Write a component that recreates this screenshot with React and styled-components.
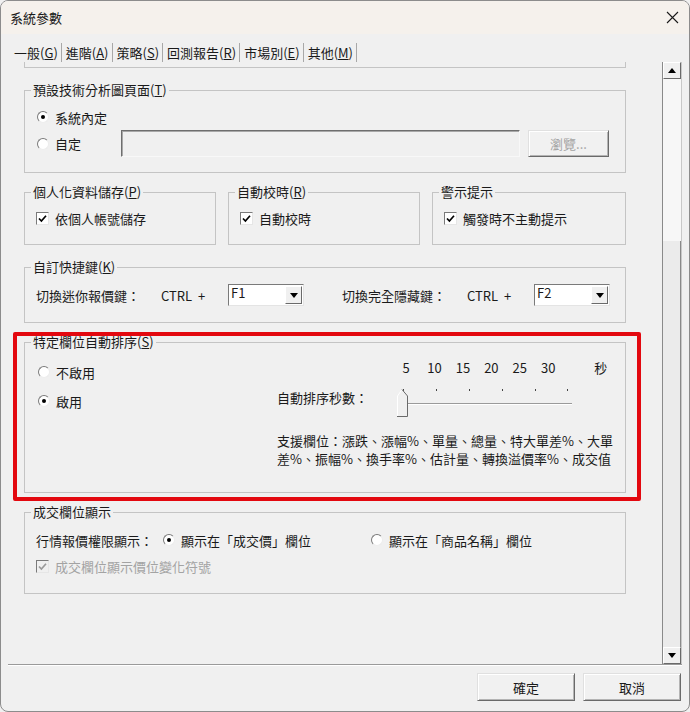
import React from "react";
import styled, { createGlobalStyle } from "styled-components";

const GlobalStyle = createGlobalStyle`
  html, body {
    margin: 0;
    padding: 0;
    background: #f0f0f0;
  }
  body {
    font-family: "Noto Sans CJK TC", "Noto Sans", sans-serif;
    font-size: 13px;
    color: #1a1a1a;
  }
`;

const Window = styled.div`
  box-sizing: border-box;
  width: 690px;
  height: 712px;
  background: #f0f0f0;
  border: 1px solid #8c8c8c;
  border-radius: 8px;
  overflow: hidden;
  display: flex;
  flex-direction: column;
`;

const TitleBar = styled.div`
  height: 33px;
  flex-shrink: 0;
  background: #f5f1ec;
  display: flex;
  align-items: center;
  justify-content: space-between;
  padding: 0 10px 0 9px;
  font-size: 13px;
`;

const TabStrip = styled.div`
  display: flex;
  margin-top: 9px;
  height: 19px;
  padding-left: 13px;
`;

const Tab = styled.div`
  line-height: 19px;
  padding: 0 3px 0 ${({ $first }) => ($first ? 0 : 4)}px;
  border-right: 1px solid #a8a8a8;
  white-space: nowrap;
`;

const ScrollArea = styled.div`
  box-sizing: border-box;
  display: flex;
  margin-left: 7px;
  width: 674px;
  height: 603px;
  border-bottom: 1px solid #9a9a9a;
  box-shadow: 0 1px 0 #ffffff;
`;

const Content = styled.div`
  flex: 1;
  padding-left: 16px;
  display: flex;
  flex-direction: column;
  overflow: hidden;
`;

const Fragment = styled.div`
  box-sizing: border-box;
  width: 602px;
  height: 6px;
  border: 1px solid #c4c4c4;
  border-top: none;
  flex-shrink: 0;
`;

const GroupBox = styled.fieldset`
  box-sizing: border-box;
  margin: ${({ $mt }) => $mt || 0}px 0 0 0;
  padding: 0;
  min-width: 0;
  width: ${({ $w }) => ($w ? `${$w}px` : "602px")};
  height: ${({ $h }) => $h}px;
  border: 1px solid #c4c4c4;
  flex-shrink: 0;
`;

const Legend = styled.legend`
  margin-left: 6px;
  padding: 0 2px;
  line-height: 16px;
  font-size: 13px;
  white-space: nowrap;
`;

const GroupBody = styled.div`
  padding: ${({ $pt }) => $pt || 0}px 0 0 ${({ $pl }) => ($pl === undefined ? 11 : $pl)}px;
  display: ${({ $row }) => ($row ? "flex" : "block")};
`;

const GroupRow = styled.div`
  display: grid;
  grid-template-columns: 192px 192px 194px;
  column-gap: 12px;
  margin-top: 11px;
  flex-shrink: 0;
`;

const Row = styled.div`
  display: flex;
  align-items: center;
  height: ${({ $h }) => $h || 20}px;
  margin-top: ${({ $mt }) => $mt || 0}px;
  white-space: nowrap;
  color: ${({ $disabled }) => ($disabled ? "#a3a3a3" : "inherit")};
`;

const Cell = styled.div`
  width: ${({ $w }) => $w}px;
  flex-shrink: 0;
  display: flex;
  align-items: center;
`;

const RadioDot = styled.span`
  box-sizing: border-box;
  width: 12px;
  height: 12px;
  border-radius: 50%;
  background: #ffffff;
  border: 1px solid;
  border-color: #7a7a7a #ececec #ececec #7a7a7a;
  margin-right: 6px;
  position: relative;
  flex-shrink: 0;

  &::after {
    content: "";
    display: ${({ $on }) => ($on ? "block" : "none")};
    position: absolute;
    left: 3px;
    top: 3px;
    width: 4px;
    height: 4px;
    border-radius: 50%;
    background: #000;
  }
`;

const CheckBox = styled.span`
  box-sizing: border-box;
  width: 13px;
  height: 13px;
  background: ${({ $disabled }) => ($disabled ? "#f0f0f0" : "#ffffff")};
  border: 1px solid;
  border-color: #7a7a7a #e6e6e6 #e6e6e6 #7a7a7a;
  margin-right: 6px;
  display: flex;
  align-items: center;
  justify-content: center;
  flex-shrink: 0;
`;

const TextField = styled.div`
  box-sizing: border-box;
  width: 399px;
  height: 27px;
  border: 1px solid;
  border-color: #6e6e6e #f8f8f8 #f8f8f8 #6e6e6e;
  box-shadow: inset 1px 1px 0 #a8a8a8;
  background: #f0f0f0;
`;

const PushButton = styled.button`
  box-sizing: border-box;
  width: ${({ $w }) => $w}px;
  height: ${({ $h }) => $h}px;
  margin-left: ${({ $ml }) => $ml || 0}px;
  background: #f1f1f1;
  border: 1px solid;
  border-color: #e0e0e0 #6a6a6a #6a6a6a #e0e0e0;
  box-shadow: inset 1px 1px 0 #ffffff, inset -1px -1px 0 #b4b4b4;
  font-family: inherit;
  font-size: 13px;
  color: ${({ $disabled }) => ($disabled ? "#a3a3a3" : "#1a1a1a")};
  padding: 0;
`;

const Combo = styled.div`
  box-sizing: border-box;
  width: 76px;
  height: 22px;
  background: #ffffff;
  border: 1px solid;
  border-color: #7a7a7a #e4e4e4 #e4e4e4 #7a7a7a;
  display: flex;
  align-items: flex-start;
  justify-content: space-between;
  font-size: 13px;
  line-height: 16px;
  padding-left: 2px;
`;

const DropButton = styled.div`
  box-sizing: border-box;
  width: 17px;
  height: 18px;
  margin: 1px 1px 0 0;
  background: #f0f0f0;
  border: 1px solid;
  border-color: #ffffff #6a6a6a #6a6a6a #ffffff;
  display: flex;
  align-items: center;
  justify-content: center;

  &::after {
    content: "";
    border-left: 4px solid transparent;
    border-right: 4px solid transparent;
    border-top: 5px solid #000;
  }
`;

const RedFrame = styled.div`
  box-sizing: border-box;
  margin: 9px 0 0 -11px;
  width: 628px;
  height: 169px;
  border: 4px solid #e3080f;
  border-radius: 2px;
  padding: 0 10px 0 7px;
  flex-shrink: 0;
`;

const LeftCol = styled.div`
  box-sizing: border-box;
  width: 252px;
  padding: 12px 0 0 13px;
  flex-shrink: 0;
`;

const RightCol = styled.div`
  padding-top: 9px;
`;

const ScaleRow = styled.div`
  display: flex;
  height: 18px;
  line-height: 18px;
  padding-left: 115px;
`;

const ScaleNum = styled.span`
  width: 28.4px;
  text-align: center;
`;

const ScaleUnit = styled.span`
  margin-left: 32px;
`;

const SliderRow = styled.div`
  display: flex;
  margin-top: 9px;
  height: 32px;
`;

const SliderLabel = styled.div`
  width: 118px;
  margin-top: 3px;
  line-height: 18px;
  white-space: nowrap;
`;

const Support = styled.div`
  margin-top: 14px;
  line-height: 18px;
  white-space: nowrap;
`;

const ScrollBar = styled.div`
  box-sizing: border-box;
  width: 20px;
  display: flex;
  flex-direction: column;
  border-left: 1px solid #8a8a8a;
  border-right: 1px solid #c8c8c8;
`;

const ArrowButton = styled.div`
  box-sizing: border-box;
  height: 17px;
  flex-shrink: 0;
  background: #f0f0f0;
  border: 1px solid;
  border-color: #ffffff #6a6a6a #6a6a6a #ffffff;
  display: flex;
  align-items: center;
  justify-content: center;

  &::after {
    content: "";
    border-left: 4px solid transparent;
    border-right: 4px solid transparent;
    ${({ $dir }) =>
      $dir === "up"
        ? "border-bottom: 5px solid #000;"
        : "border-top: 5px solid #000;"}
  }
`;

const Thumb = styled.div`
  height: 162px;
  background: #f7f7f7;
  flex-shrink: 0;
`;

const Track = styled.div`
  flex: 1;
  background: #ebebeb;
  border-right: 1px solid #8a8a8a;
`;

const Footer = styled.div`
  display: flex;
  justify-content: flex-end;
  gap: 8px;
  padding: 8px 8px 0 0;
`;

const Radio = ({ on, children }) => (
  <>
    <RadioDot $on={on} />
    <span>{children}</span>
  </>
);

const Check = ({ disabled, children }) => (
  <>
    <CheckBox $disabled={disabled}>
      <svg width="9" height="9" viewBox="0 0 9 9">
        <path
          d="M1 4.5 L3.4 7 L8 1.8"
          fill="none"
          stroke={disabled ? "#9a9a9a" : "#000"}
          strokeWidth="1.7"
        />
      </svg>
    </CheckBox>
    <span>{children}</span>
  </>
);

// slider drawn as a small svg: ticks, sunken track, pointer thumb
const Slider = () => {
  const ticks = [8, 41, 74, 107, 140, 172];
  return (
    <svg width="182" height="32" viewBox="0 0 182 32">
      {ticks.map((x) => (
        <rect key={x} x={x} y="3" width="1" height="2" fill="#444" />
      ))}
      <line x1="12" y1="17.5" x2="177" y2="17.5" stroke="#9a9a9a" />
      <line x1="12" y1="18.5" x2="177" y2="18.5" stroke="#ffffff" />
      <polygon points="2,10 7,3 12,10 12,30 2,30" fill="#f0f0f0" />
      <polyline points="2.5,30 2.5,10 7,3.5" fill="none" stroke="#ffffff" />
      <polyline points="7,3.5 12.5,10 12.5,30.5 2,30.5" fill="none" stroke="#6a6a6a" />
    </svg>
  );
};

const App = () => {
  return (
    <>
      <GlobalStyle />
      <Window>
        <TitleBar>
          <span>系統參數</span>
          <svg width="13" height="13" viewBox="0 0 13 13">
            <path d="M1 1 L12 12 M12 1 L1 12" stroke="#1a1a1a" strokeWidth="1.1" />
          </svg>
        </TitleBar>

        <TabStrip>
          <Tab $first>一般(<u>G</u>)</Tab>
          <Tab>進階(<u>A</u>)</Tab>
          <Tab>策略(<u>S</u>)</Tab>
          <Tab>回測報告(<u>R</u>)</Tab>
          <Tab>市場別(<u>E</u>)</Tab>
          <Tab>其他(<u>M</u>)</Tab>
        </TabStrip>

        <ScrollArea>
          <Content>
            <Fragment />

            <GroupBox $mt={14} $h={91}>
              <Legend>預設技術分析圖頁面(<u>T</u>)</Legend>
              <GroupBody $pt={6} $pl={12}>
                <Row $h={26}>
                  <Radio on>系統內定</Radio>
                </Row>
                <Row $h={27}>
                  <Cell $w={84}>
                    <Radio>自定</Radio>
                  </Cell>
                  <TextField />
                  <PushButton $w={81} $h={27} $ml={8} $disabled>
                    瀏覽...
                  </PushButton>
                </Row>
              </GroupBody>
            </GroupBox>

            <GroupRow>
              <GroupBox $w={192} $h={61}>
                <Legend>個人化資料儲存(<u>P</u>)</Legend>
                <GroupBody $pt={9}>
                  <Row $h={18}>
                    <Check>依個人帳號儲存</Check>
                  </Row>
                </GroupBody>
              </GroupBox>
              <GroupBox $w={192} $h={61}>
                <Legend>自動校時(<u>R</u>)</Legend>
                <GroupBody $pt={9}>
                  <Row $h={18}>
                    <Check>自動校時</Check>
                  </Row>
                </GroupBody>
              </GroupBox>
              <GroupBox $w={194} $h={61}>
                <Legend>警示提示</Legend>
                <GroupBody $pt={9}>
                  <Row $h={18}>
                    <Check>觸發時不主動提示</Check>
                  </Row>
                </GroupBody>
              </GroupBox>
            </GroupRow>

            <GroupBox $mt={14} $h={64}>
              <Legend>自訂快捷鍵(<u>K</u>)</Legend>
              <GroupBody $pt={9}>
                <Row $h={22}>
                  <Cell $w={125}>切換迷你報價鍵：</Cell>
                  <Cell $w={67}>CTRL&nbsp;&nbsp;+</Cell>
                  <Combo>
                    F1
                    <DropButton />
                  </Combo>
                  <Cell $w={38} />
                  <Cell $w={125}>切換完全隱藏鍵：</Cell>
                  <Cell $w={67}>CTRL&nbsp;&nbsp;+</Cell>
                  <Combo>
                    F2
                    <DropButton />
                  </Combo>
                </Row>
              </GroupBody>
            </GroupBox>

            <RedFrame>
              <GroupBox $mt={-2} $h={159}>
                <Legend>特定欄位自動排序(<u>S</u>)</Legend>
                <GroupBody $row $pl={0}>
                  <LeftCol>
                    <Row>
                      <Radio>不啟用</Radio>
                    </Row>
                    <Row $mt={9}>
                      <Radio on>啟用</Radio>
                    </Row>
                  </LeftCol>
                  <RightCol>
                    <ScaleRow>
                      <ScaleNum>5</ScaleNum>
                      <ScaleNum>10</ScaleNum>
                      <ScaleNum>15</ScaleNum>
                      <ScaleNum>20</ScaleNum>
                      <ScaleNum>25</ScaleNum>
                      <ScaleNum>30</ScaleNum>
                      <ScaleUnit>秒</ScaleUnit>
                    </ScaleRow>
                    <SliderRow>
                      <SliderLabel>自動排序秒數：</SliderLabel>
                      <Slider />
                    </SliderRow>
                    <Support>
                      支援欄位：漲跌、漲幅%、單量、總量、特大單差%、大單
                      <br />
                      差%、振幅%、換手率%、估計量、轉換溢價率%、成交值
                    </Support>
                  </RightCol>
                </GroupBody>
              </GroupBox>
            </RedFrame>

            <GroupBox $mt={3} $h={90}>
              <Legend>成交欄位顯示</Legend>
              <GroupBody $pt={10}>
                <Row>
                  <Cell $w={127}>行情報價權限顯示：</Cell>
                  <Cell $w={208}>
                    <Radio on>顯示在「成交價」欄位</Radio>
                  </Cell>
                  <Radio>顯示在「商品名稱」欄位</Radio>
                </Row>
                <Row $mt={6} $disabled>
                  <Check disabled>成交欄位顯示價位變化符號</Check>
                </Row>
              </GroupBody>
            </GroupBox>
          </Content>

          <ScrollBar>
            <ArrowButton $dir="up" />
            <Thumb />
            <Track />
            <ArrowButton $dir="down" />
          </ScrollBar>
        </ScrollArea>

        <Footer>
          <PushButton $w={98} $h={28}>確定</PushButton>
          <PushButton $w={98} $h={28}>取消</PushButton>
        </Footer>
      </Window>
    </>
  );
};

export default App;
